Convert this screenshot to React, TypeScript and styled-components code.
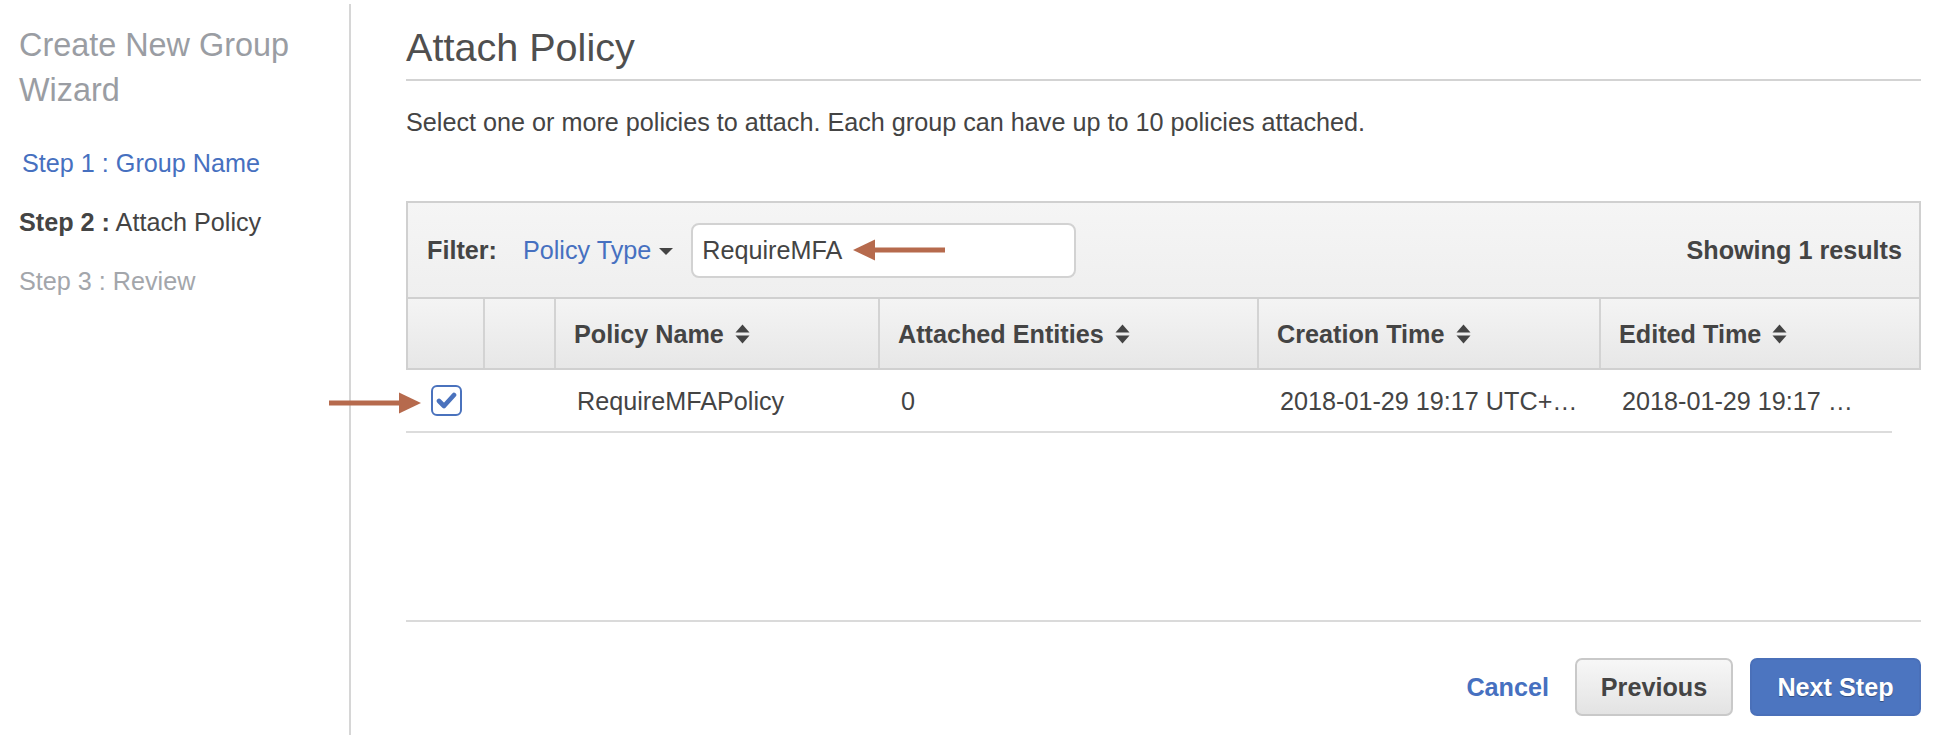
import React from "react";
import styled, { createGlobalStyle } from "styled-components";

const GlobalStyle = createGlobalStyle`
  html, body { margin: 0; padding: 0; background: #ffffff; }
  body { font-family: "Liberation Sans", Arial, Helvetica, sans-serif; color: #444444; }
  * { box-sizing: border-box; }
`;

const Page = styled.div`
  display: flex;
  width: 1950px;
  height: 735px;
  overflow: hidden;
  background: #ffffff;
`;

const Sidebar = styled.aside`
  flex: 0 0 351px;
  margin-top: 4px;
  padding: 19px 0 0 19px;
  border-right: 2px solid #d6d6d6;
`;

const WizardTitle = styled.h1`
  margin: 0;
  font-size: 32.4px;
  line-height: 45px;
  font-weight: normal;
  color: #9a9da3;
  width: 300px;
`;

const StepList = styled.nav`
  display: flex;
  flex-direction: column;
  gap: 29px;
  margin-top: 35px;
`;

const StepLink = styled.a`
  display: block;
  padding-left: 3px;
  font-size: 25.2px;
  line-height: 30px;
  color: #4670c0;
  text-decoration: none;
`;

const Step = styled.div<{ $state: "current" | "future" }>`
  font-size: 25.2px;
  line-height: 30px;
  color: ${(p) => (p.$state === "current" ? "#444444" : "#a3a6ab")};
  b { font-weight: bold; }
`;

const Main = styled.main`
  flex: 1;
  display: flex;
  flex-direction: column;
  padding: 23px 29px 0 55px;
`;

const Title = styled.h2`
  margin: 0;
  font-size: 39.6px;
  line-height: 48px;
  font-weight: normal;
  color: #4f4f4f;
  padding-bottom: 8px;
  border-bottom: 2px solid #d3d3d3;
`;

const Description = styled.p`
  margin: 26px 0 0;
  font-size: 25.2px;
  line-height: 30px;
  color: #444444;
`;

const TableBox = styled.section`
  margin-top: 64px;
  display: flex;
  flex-direction: column;
`;

const FilterBar = styled.div`
  display: flex;
  align-items: center;
  height: 96px;
  padding: 0 17px 0 19px;
  border: 2px solid #d0d0d0;
  border-bottom: none;
  background: linear-gradient(#f5f5f5, #efefef);
  font-size: 25.2px;
  line-height: 30px;
`;

const FilterLabel = styled.span`
  font-weight: bold;
  color: #444444;
`;

const TypeMenu = styled.a`
  display: flex;
  align-items: center;
  gap: 8px;
  margin-left: 26px;
  color: #4670c0;
  text-decoration: none;
`;

const Caret = styled.svg`
  width: 14px;
  height: 8px;
  margin-top: 3px;
`;

const SearchBox = styled.div`
  display: flex;
  align-items: center;
  width: 385px;
  height: 55px;
  margin-left: 18px;
  padding-left: 9px;
  border: 2px solid #d2d2d2;
  border-radius: 8px;
  background: #ffffff;
  color: #444444;
`;

const PointerArrow = styled.svg`
  flex: none;
  margin-left: 11px;
  width: 92px;
  height: 22px;
`;

const ResultCount = styled.span`
  margin-left: auto;
  font-weight: bold;
  color: #444444;
`;

const HeaderRow = styled.div`
  display: grid;
  grid-template-columns: 75px 71px 324px 379px 342px 1fr;
  height: 73px;
  border: 2px solid #d0d0d0;
  background: linear-gradient(#f4f4f4, #e7e7e7);
`;

const HeaderCell = styled.div<{ $first?: boolean }>`
  display: flex;
  align-items: center;
  gap: 11px;
  padding-left: 18px;
  border-left: ${(p) => (p.$first ? "none" : "2px solid #d3d3d3")};
  font-size: 25.2px;
  line-height: 30px;
  font-weight: bold;
  color: #444444;
  white-space: nowrap;
`;

const SortIcon = styled.svg`
  width: 15px;
  height: 20px;
  flex: none;
`;

const DataRow = styled.div`
  display: grid;
  grid-template-columns: 77px 71px 324px 379px 342px 1fr;
  height: 63px;
  margin-right: 29px;
  border-bottom: 2px solid #dcdcdc;
`;

const DataCell = styled.div`
  display: flex;
  align-items: center;
  padding-left: 23px;
  font-size: 25.2px;
  line-height: 30px;
  color: #444444;
  white-space: nowrap;
  overflow: hidden;
`;

const CheckCell = styled.div`
  position: relative;
  display: flex;
  align-items: center;
  padding-left: 25px;
`;

const CheckBox = styled.span`
  display: flex;
  align-items: center;
  justify-content: center;
  width: 31px;
  height: 31px;
  border: 2px solid #4a72bd;
  border-radius: 6px;
  background: #ffffff;
`;

const RowPointer = styled.svg`
  position: absolute;
  left: -77px;
  top: 22px;
  width: 92px;
  height: 22px;
`;

const Footer = styled.footer`
  margin-top: 187px;
  padding-top: 36px;
  border-top: 2px solid #dadada;
  display: flex;
  justify-content: flex-end;
  align-items: center;
`;

const CancelLink = styled.a`
  margin-right: 26px;
  font-size: 25.2px;
  font-weight: bold;
  color: #4670c0;
  text-decoration: none;
`;

const Button = styled.button<{ $primary?: boolean }>`
  height: 58px;
  width: ${(p) => (p.$primary ? "171px" : "158px")};
  margin-right: ${(p) => (p.$primary ? "0" : "17px")};
  border-radius: 7px;
  border: 2px solid ${(p) => (p.$primary ? "#4a70b9" : "#c9c9c9")};
  background: ${(p) =>
    p.$primary ? "#4c75c0" : "linear-gradient(#f7f7f7, #e3e3e3)"};
  color: ${(p) => (p.$primary ? "#ffffff" : "#444444")};
  text-shadow: ${(p) => (p.$primary ? "0 1px 1px rgba(0,0,0,0.35)" : "none")};
  font-family: "Liberation Sans", Arial, sans-serif;
  font-size: 25.2px;
  font-weight: bold;
  padding: 0;
  cursor: pointer;
`;

const ARROW = "#b66a4d";

const Sort = () => (
  <SortIcon viewBox="0 0 15 20">
    <polygon points="0.5,8.5 7.5,0.5 14.5,8.5" fill="#444" />
    <polygon points="0.5,11.5 7.5,19.5 14.5,11.5" fill="#444" />
  </SortIcon>
);

export default function App() {
  const headers = ["Policy Name", "Attached Entities", "Creation Time", "Edited Time"];
  return (
    <>
      <GlobalStyle />
      <Page>
        <Sidebar>
          <WizardTitle>Create New Group Wizard</WizardTitle>
          <StepList>
            <StepLink href="#">Step 1 : Group Name</StepLink>
            <Step $state="current">
              <b>Step 2 :</b> Attach Policy
            </Step>
            <Step $state="future">Step 3 : Review</Step>
          </StepList>
        </Sidebar>
        <Main>
          <Title>Attach Policy</Title>
          <Description>
            Select one or more policies to attach. Each group can have up to 10 policies attached.
          </Description>
          <TableBox>
            <FilterBar>
              <FilterLabel>Filter:</FilterLabel>
              <TypeMenu href="#">
                Policy Type
                <Caret viewBox="0 0 14 8">
                  <polygon points="0,0 14,0 7,7" fill="#444" />
                </Caret>
              </TypeMenu>
              <SearchBox>
                RequireMFA
                <PointerArrow viewBox="0 0 92 22">
                  <rect x="18" y="8.5" width="74" height="5" fill={ARROW} />
                  <polygon points="0,11 22,0.5 22,21.5" fill={ARROW} />
                </PointerArrow>
              </SearchBox>
              <ResultCount>Showing 1 results</ResultCount>
            </FilterBar>
            <HeaderRow>
              <HeaderCell $first />
              <HeaderCell />
              {headers.map((h) => (
                <HeaderCell key={h}>
                  {h}
                  <Sort />
                </HeaderCell>
              ))}
            </HeaderRow>
            <DataRow>
              <CheckCell>
                <RowPointer viewBox="0 0 92 22">
                  <rect x="0" y="8.5" width="74" height="5" fill={ARROW} />
                  <polygon points="92,11 70,0.5 70,21.5" fill={ARROW} />
                </RowPointer>
                <CheckBox>
                  <svg width="21" height="17" viewBox="0 0 21 17">
                    <polyline
                      points="3,9 8,14 18,3"
                      fill="none"
                      stroke="#4a72bd"
                      strokeWidth="4.6"
                      strokeLinecap="round"
                      strokeLinejoin="round"
                    />
                  </svg>
                </CheckBox>
              </CheckCell>
              <DataCell />
              <DataCell>RequireMFAPolicy</DataCell>
              <DataCell>0</DataCell>
              <DataCell>2018-01-29 19:17 UTC+…</DataCell>
              <DataCell>2018-01-29 19:17 …</DataCell>
            </DataRow>
          </TableBox>
          <Footer>
            <CancelLink href="#">Cancel</CancelLink>
            <Button>Previous</Button>
            <Button $primary>Next Step</Button>
          </Footer>
        </Main>
      </Page>
    </>
  );
}
